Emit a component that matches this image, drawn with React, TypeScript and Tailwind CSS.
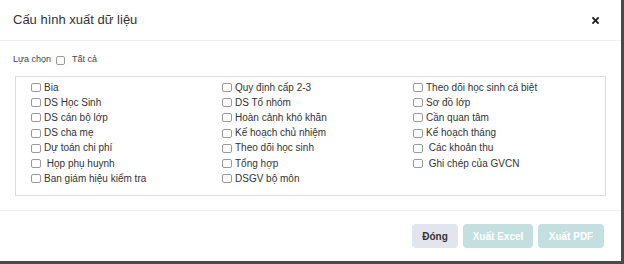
import React from "react";

const col1 = [
  "Bia",
  "DS Học Sinh",
  "DS cán bộ lớp",
  "DS cha mẹ",
  "Dự toán chi phí",
  " Họp phụ huynh",
  "Ban giám hiệu kiểm tra",
];
const col2 = [
  "Quy định cấp 2-3",
  "DS Tổ nhóm",
  "Hoàn cảnh khó khăn",
  "Kế hoạch chủ nhiệm",
  "Theo dõi học sinh",
  "Tổng hợp",
  "DSGV bộ môn",
];
const col3 = [
  "Theo dõi học sinh cá biệt",
  "Sơ đồ lớp",
  "Cần quan tâm",
  "Kế hoạch tháng",
  " Các khoản thu",
  " Ghi chép của GVCN",
];

function Box() {
  return (
    <span className="inline-block w-[10px] h-[9px] rounded-[2px] border border-[#9a9a9a] bg-white shrink-0" />
  );
}

function Item({ label }: { label: string }) {
  return (
    <div className="flex items-center h-[15.2px] gap-[3px]">
      <Box />
      <span className="whitespace-pre text-[10px] text-[#333333] leading-none">{label}</span>
    </div>
  );
}

export default function App() {
  return (
    <div
      className="w-[624px] h-[264px] bg-white border-r-[3px] border-b-[3px] border-[#4a4a4a] flex flex-col"
      style={{ fontFamily: '"Liberation Sans", Arial, sans-serif' }}
    >
      <div className="h-[41px] shrink-0 flex items-center justify-between pl-[13px] pr-[22px] border-b border-[#efefef]">
        <span className="text-[13px] text-[#333333]">Cấu hình xuất dữ liệu</span>
        <svg width="7" height="7" viewBox="0 0 7 7" className="mt-[1px]">
          <path d="M1 1 L6 6 M6 1 L1 6" stroke="#222" strokeWidth="1.8" strokeLinecap="square" />
        </svg>
      </div>

      <div className="px-[15px] pt-[12px] pb-[14px] border-b border-[#efefef]">
        <div className="flex items-center h-[14px] pl-[-2px] -ml-[2px] text-[9px] text-[#444444]">
          <span>Lựa chọn</span>
          <span className="ml-[5px] inline-block w-[9px] h-[9px] rounded-[2px] border border-[#9a9a9a]" />
          <span className="ml-[7px]">Tất cả</span>
        </div>
        <div className="mt-[9px] h-[120px] border border-[#dcdcdc] pl-[15px] pt-[3px] flex">
          <div className="w-[191px] flex flex-col">
            {col1.map((t) => (
              <Item key={t} label={t} />
            ))}
          </div>
          <div className="w-[191px] flex flex-col">
            {col2.map((t) => (
              <Item key={t} label={t} />
            ))}
          </div>
          <div className="w-[191px] flex flex-col">
            {col3.map((t) => (
              <Item key={t} label={t} />
            ))}
          </div>
        </div>
      </div>

      <div className="flex justify-end gap-[5px] pr-[17px] pt-[13px]">
        <button className="w-[46px] h-[24px] rounded-[4px] bg-[#e3e5ee] text-[10px] font-bold text-[#333333]">
          Đóng
        </button>
        <button className="w-[70px] h-[24px] rounded-[4px] bg-[#c3dfe0] text-[10px] font-bold text-white">
          Xuất Excel
        </button>
        <button className="w-[66px] h-[24px] rounded-[4px] bg-[#c3dfe0] text-[10px] font-bold text-white">
          Xuất PDF
        </button>
      </div>
    </div>
  );
}
